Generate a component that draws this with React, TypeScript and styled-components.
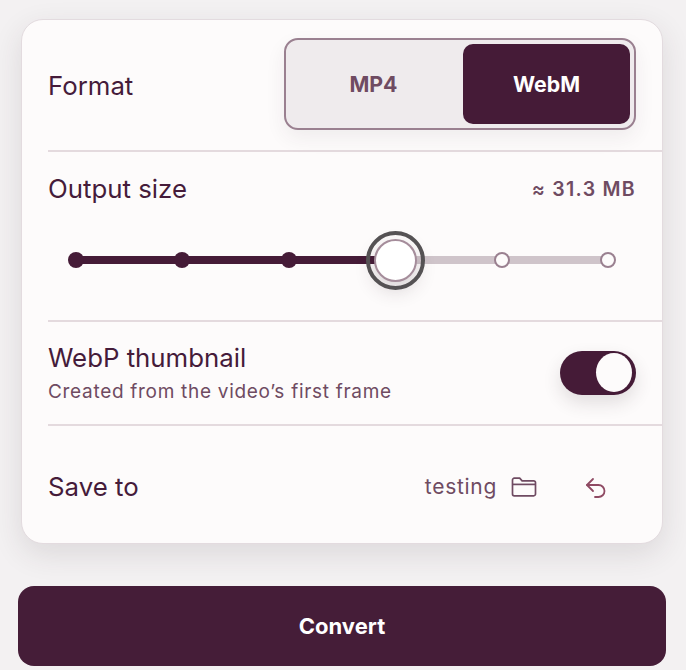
import React from "react";
import styled, { createGlobalStyle } from "styled-components";

const STOPS = [0, 1, 2, 3, 4, 5];
const ACTIVE_STOP = 3;

const GlobalStyle = createGlobalStyle`
  html, body {
    margin: 0;
    padding: 0;
    background: #f3f1f2;
    font-family: "Inter", "Liberation Sans", sans-serif;
    color: #451b37;
  }
`;

const Page = styled.div`
  width: 686px;
  height: 670px;
  box-sizing: border-box;
  padding: 19px 20px 4px 18px;
  overflow: hidden;
`;

const Card = styled.div`
  width: 642px;
  height: 525px;
  margin-left: 3px;
  box-sizing: border-box;
  padding-left: 26px;
  background: #fdfbfb;
  border: 1px solid #e3dbdf;
  border-radius: 22px;
  box-shadow: 0 10px 30px rgba(60, 40, 50, 0.12);
`;

const Section = styled.div<{ $height: number; $last?: boolean }>`
  height: ${(p) => p.$height}px;
  box-sizing: border-box;
  padding-right: 26px;
  border-bottom: ${(p) => (p.$last ? "none" : "2px solid #e4dade")};
  display: flex;
  align-items: center;
  justify-content: space-between;
`;

const FormatSection = styled(Section)`
  padding-bottom: 2px;
`;

const SizeSection = styled(Section)`
  display: block;
  padding-top: 22px;
`;

const SaveSection = styled(Section)`
  padding-top: 2px;
`;

const Label = styled.div`
  font-size: 25.8px;
  line-height: 30px;
  color: #451b3a;
`;

const FormatLabel = styled(Label)`
  padding-top: 3px;
`;

const Segmented = styled.div`
  width: 352px;
  height: 92px;
  box-sizing: border-box;
  padding: 4px;
  display: flex;
  justify-content: space-between;
  background: #efebed;
  border: 2px solid #9a8090;
  border-radius: 14px;
  box-shadow: 0 8px 20px rgba(60, 40, 50, 0.07);
`;

const Segment = styled.div<{ $active?: boolean }>`
  width: 167px;
  height: 80px;
  display: flex;
  align-items: center;
  justify-content: center;
  font-size: 21.3px;
  font-weight: 700;
  border-radius: 10px;
  color: ${(p) => (p.$active ? "#ffffff" : "#6f4b62")};
  background: ${(p) => (p.$active ? "#451b37" : "transparent")};
`;

const SizeHeader = styled.div`
  display: flex;
  align-items: center;
  justify-content: space-between;
`;

const SizeValue = styled.div`
  font-size: 19.5px;
  font-weight: 600;
  letter-spacing: 1.3px;
  color: #6f4b62;
`;

const Track = styled.div`
  position: relative;
  width: 533px;
  height: 8px;
  margin: 52px 0 0 27.5px;
  display: flex;
  align-items: center;
  justify-content: space-between;
  background: #cfc4ca;
  border-radius: 4px;
`;

const Fill = styled.div`
  position: absolute;
  left: 0;
  top: 0;
  height: 8px;
  background: #451b37;
`;

const Stop = styled.div<{ $filled: boolean }>`
  position: relative;
  width: 16px;
  height: 16px;
  box-sizing: border-box;
  margin: 0 -8px;
  border-radius: 50%;
  background: ${(p) => (p.$filled ? "#451b37" : "#fdfbfb")};
  border: ${(p) => (p.$filled ? "none" : "2px solid #9a8090")};
`;

const Thumb = styled.div`
  position: relative;
  width: 43px;
  height: 43px;
  margin: -21.5px;
  box-sizing: border-box;
  background: #ffffff;
  border: 2px solid #a58d9b;
  border-radius: 50%;
  outline: 4px solid #555254;
  outline-offset: 4.5px;
  box-shadow: 0 8px 20px rgba(60, 40, 50, 0.2);
`;

const ThumbnailText = styled.div`
  display: flex;
  flex-direction: column;
  gap: 8px;
`;

const Hint = styled.div`
  font-size: 19px;
  line-height: 22px;
  letter-spacing: 0.7px;
  color: #6f4b62;
`;

const Toggle = styled.div`
  width: 76px;
  height: 44px;
  box-sizing: border-box;
  padding: 2px 4px 2px 0;
  display: flex;
  justify-content: flex-end;
  background: #451b37;
  border-radius: 22px;
  box-shadow: 0 8px 18px rgba(60, 40, 50, 0.14);
`;

const ToggleKnob = styled.div`
  width: 36px;
  height: 39px;
  border-radius: 50%;
  background: #fdfbfb;
`;

const SaveControls = styled.div`
  display: flex;
  align-items: center;
`;

const FolderName = styled.span`
  font-size: 21px;
  letter-spacing: 0.7px;
  color: #6f4b62;
`;

const FolderIcon = styled.svg`
  width: 26px;
  height: 20px;
  margin-left: 14px;
  color: #6f4b62;
`;

const ResetIcon = styled.svg`
  width: 24px;
  height: 24px;
  margin: 0 28px 0 47px;
  color: #8f4a63;
`;

const ConvertButton = styled.button`
  display: block;
  width: 648px;
  height: 80px;
  margin-top: 42px;
  padding: 0;
  border: none;
  border-radius: 16px;
  background: #451d38;
  color: #ffffff;
  font-family: inherit;
  font-size: 22px;
  font-weight: 700;
`;

const App: React.FC = () => {
  return (
    <Page>
      <GlobalStyle />
      <Card>
        <FormatSection $height={132}>
          <FormatLabel>Format</FormatLabel>
          <Segmented>
            <Segment>MP4</Segment>
            <Segment $active>WebM</Segment>
          </Segmented>
        </FormatSection>
        <SizeSection $height={170}>
          <SizeHeader>
            <Label>Output size</Label>
            <SizeValue>≈ 31.3 MB</SizeValue>
          </SizeHeader>
          <Track>
            <Fill style={{ width: `${(ACTIVE_STOP / (STOPS.length - 1)) * 100}%` }} />
            {STOPS.map((stop) =>
              stop === ACTIVE_STOP ? <Thumb key={stop} /> : <Stop key={stop} $filled={stop < ACTIVE_STOP} />
            )}
          </Track>
        </SizeSection>
        <Section $height={104}>
          <ThumbnailText>
            <Label>WebP thumbnail</Label>
            <Hint>Created from the video’s first frame</Hint>
          </ThumbnailText>
          <Toggle>
            <ToggleKnob />
          </Toggle>
        </Section>
        <SaveSection $height={119} $last>
          <Label>Save to</Label>
          <SaveControls>
            <FolderName>testing</FolderName>
            <FolderIcon viewBox="0 0 26 20" fill="none" stroke="currentColor" strokeWidth="1.7" strokeLinejoin="round">
              <path d="M1.5 17V3a1.8 1.8 0 0 1 1.8-1.8h5.4l2.4 2.6h11.6a1.8 1.8 0 0 1 1.8 1.8V17a1.8 1.8 0 0 1-1.8 1.8H3.3A1.8 1.8 0 0 1 1.5 17Z" />
              <path d="M1.5 7.4h23" />
            </FolderIcon>
            <ResetIcon viewBox="0 0 24 24" fill="none" stroke="currentColor" strokeWidth="1.8" strokeLinecap="round" strokeLinejoin="round">
              <path d="M9 4 3 10l6 6" />
              <path d="M3 10h11.5a6 6 0 0 1 0 12H11" />
            </ResetIcon>
          </SaveControls>
        </SaveSection>
      </Card>
      <ConvertButton>Convert</ConvertButton>
    </Page>
  );
};

export default App;
